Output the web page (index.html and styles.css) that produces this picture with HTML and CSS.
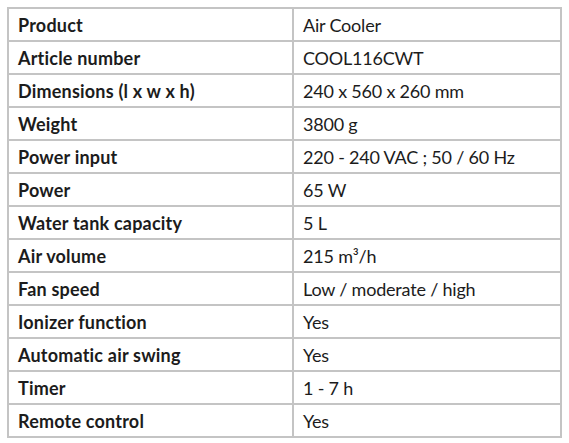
FILE: index.html
```html
<!DOCTYPE html>
<html>
<head>
<meta charset="utf-8">
<link rel="stylesheet" href="styles.css">
</head>
<body>
<table class="specs">
<tr><th>Product</th><td>Air Cooler</td></tr>
<tr><th>Article number</th><td>COOL116CWT</td></tr>
<tr><th>Dimensions (l x w x h)</th><td>240 x 560 x 260 mm</td></tr>
<tr><th>Weight</th><td>3800 g</td></tr>
<tr><th>Power input</th><td>220 - 240 VAC ; 50 / 60 Hz</td></tr>
<tr><th>Power</th><td>65 W</td></tr>
<tr><th>Water tank capacity</th><td>5 L</td></tr>
<tr><th>Air volume</th><td>215 m³/h</td></tr>
<tr><th>Fan speed</th><td>Low / moderate / high</td></tr>
<tr><th>Ionizer function</th><td>Yes</td></tr>
<tr><th>Automatic air swing</th><td>Yes</td></tr>
<tr><th>Timer</th><td>1 - 7 h</td></tr>
<tr><th>Remote control</th><td>Yes</td></tr>
</table>
</body>
</html>
```
FILE: styles.css
```css
html, body {
  margin: 0;
  padding: 0;
  background: #ffffff;
}
body {
  padding: 7px 0 0 7px;
  font-family: Lato, "Open Sans", sans-serif;
  color: #1c1c1c;
}
.specs {
  border-collapse: collapse;
  width: 555px;
  table-layout: fixed;
}
.specs th, .specs td {
  border: 2px solid #c4c4c4;
  height: 31px;
  padding: 0 0 0 9px;
  font-size: 18px;
  line-height: 20px;
  text-align: left;
  vertical-align: middle;
  white-space: nowrap;
}
.specs th {
  width: 274px;
  font-weight: 700;
  letter-spacing: 0.2px;
}
.specs td {
  font-weight: 400;
  letter-spacing: -0.2px;
}
```
